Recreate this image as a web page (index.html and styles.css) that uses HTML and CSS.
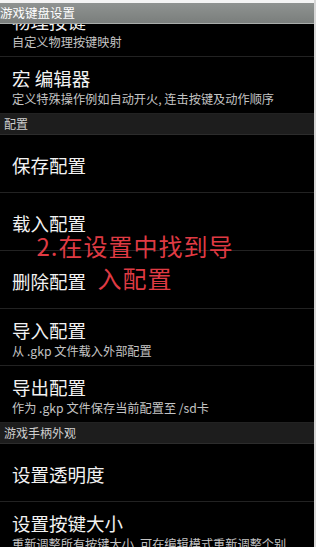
FILE: index.html
```html
<!DOCTYPE html>
<html lang="zh">
<head>
<meta charset="utf-8">
<link rel="stylesheet" href="styles.css">
</head>
<body>
<div class="screen">
  <div class="titlebar">游戏键盘设置</div>
  <div class="list">
    <div class="item two first">
      <div class="t">物理按键</div>
      <div class="s">自定义物理按键映射</div>
    </div>
    <div class="item two">
      <div class="t">宏 编辑器</div>
      <div class="s">定义特殊操作例如自动开火, 连击按键及动作顺序</div>
    </div>
    <div class="header">配置</div>
    <div class="item one"><div class="t">保存配置</div></div>
    <div class="item one"><div class="t">载入配置</div></div>
    <div class="item one"><div class="t">删除配置</div></div>
    <div class="item two">
      <div class="t">导入配置</div>
      <div class="s">从 .gkp 文件载入外部配置</div>
    </div>
    <div class="item two">
      <div class="t">导出配置</div>
      <div class="s">作为 .gkp 文件保存当前配置至 /sd卡</div>
    </div>
    <div class="header">游戏手柄外观</div>
    <div class="item one"><div class="t">设置透明度</div></div>
    <div class="item two">
      <div class="t">设置按键大小</div>
      <div class="s">重新调整所有按键大小, 可在编辑模式重新调整个别</div>
    </div>
  </div>
  <div class="note">2.在设置中找到导<br>入配置</div>
</div>
</body>
</html>
```
FILE: styles.css
```css
* { box-sizing: border-box; }
html, body { margin: 0; padding: 0; background: #000; }
body {
  font-family: "Noto Sans CJK SC", "Noto Sans", sans-serif;
  width: 316px;
  height: 547px;
  overflow: hidden;
}
.screen {
  position: relative;
  width: 316px;
  height: 547px;
  display: flex;
  flex-direction: column;
  background: #000;
  border-right: 2px solid #d8d8d8;
  overflow: hidden;
}
.titlebar {
  flex: none;
  height: 24px;
  border-top: 3px solid #f4f4f4;
  border-bottom: 1px solid #a9adab;
  background: linear-gradient(#8f9391, #7a7e7c);
  color: #fff;
  font-size: 12.5px;
  line-height: 20px;
  white-space: nowrap;
  position: relative;
  z-index: 1;
}
.list {
  flex: 1;
  overflow: hidden;
  display: flex;
  flex-direction: column;
}
.item {
  flex: none;
  height: 57px;
  border-bottom: 1px solid #222;
  padding-left: 12px;
  display: flex;
  flex-direction: column;
  justify-content: center;
  white-space: nowrap;
}
.item.one { height: 58px; }
.item.first { margin-top: -24px; }
.item .t {
  color: #f2f2f2;
  font-size: 18.5px;
  line-height: 24px;
}
.item .s {
  color: #c4c4c4;
  font-size: 12.2px;
  line-height: 18px;
}
.item.two { justify-content: flex-start; padding-top: 9px; }
.item.one .t { margin-top: 2px; }
.header {
  flex: none;
  height: 21px;
  background: #1d1d1d;
  border-bottom: 1px solid #2c2c2c;
  color: #cfcfcf;
  font-size: 12px;
  line-height: 20px;
  padding-left: 4px;
}
.note {
  position: absolute;
  left: 33px;
  top: 230px;
  width: 204px;
  text-align: center;
  color: #df3a43;
  font-size: 24px;
  line-height: 32px;
  letter-spacing: 1px;
}
```
